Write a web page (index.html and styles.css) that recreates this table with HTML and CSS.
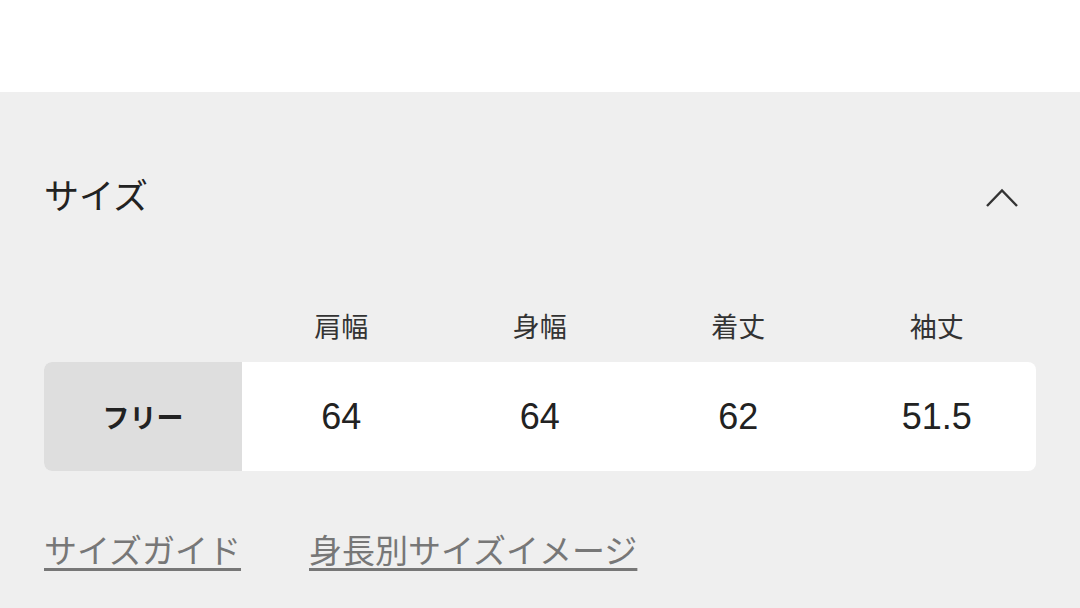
FILE: index.html
```html
<!DOCTYPE html>
<html lang="ja">
<head>
<meta charset="utf-8">
<link rel="stylesheet" href="styles.css">
</head>
<body>
<div class="top"></div>
<section class="size">
  <div class="size-head">
    <h2 class="title">サイズ</h2>
    <svg class="chev" width="36" height="22" viewBox="0 0 36 22"><polyline points="3,19 18,3.5 33,19" fill="none" stroke="#333" stroke-width="2.4"/></svg>
  </div>
  <div class="table">
    <div class="labels">
      <span></span><span>肩幅</span><span>身幅</span><span>着丈</span><span>袖丈</span>
    </div>
    <div class="row">
      <span class="name">フリー</span><span>64</span><span>64</span><span>62</span><span>51.5</span>
    </div>
  </div>
  <div class="links">
    <a class="link">サイズガイド</a>
    <a class="link">身長別サイズイメージ</a>
  </div>
</section>
</body>
</html>
```
FILE: styles.css
```css
html, body {
  margin: 0;
  padding: 0;
  background: #fff;
}
body {
  font-family: "Noto Sans CJK JP", "Noto Sans", sans-serif;
  color: #222;
  width: 1080px;
  height: 608px;
  overflow: hidden;
}
.top {
  height: 92px;
  background: #fff;
}
.size {
  background: #efefef;
  padding: 0 44px;
  height: 516px;
}
.size-head {
  height: 202px;
  display: flex;
  align-items: center;
  justify-content: space-between;
}
.title {
  margin: 0;
  font-size: 35px;
  font-weight: 400;
  line-height: 1;
  color: #222;
}
.chev {
  margin-right: 16px;
  margin-top: 10px;
}
.labels, .row {
  display: grid;
  grid-template-columns: 198px repeat(4, 1fr);
}
.labels {
  height: 62px;
  padding-bottom: 6px;
  align-items: center;
  text-align: center;
  font-size: 27px;
  color: #333;
}
.row {
  height: 109px;
  background: #fff;
  border-radius: 8px;
  overflow: hidden;
  align-items: stretch;
}
.row span {
  display: flex;
  align-items: center;
  justify-content: center;
  font-family: "Liberation Sans", "Noto Sans CJK JP", sans-serif;
  font-size: 36px;
  color: #222;
}
.row .name {
  background: #dedede;
  font-family: "Noto Sans CJK JP", sans-serif;
  font-size: 27px;
  font-weight: 700;
}
.links {
  margin-top: 54px;
  display: flex;
  gap: 68px;
}
.link {
  font-size: 33px;
  line-height: 1.5;
  color: #777;
  text-decoration: underline;
  text-decoration-thickness: 3px;
  text-underline-offset: 5px;
}
```
